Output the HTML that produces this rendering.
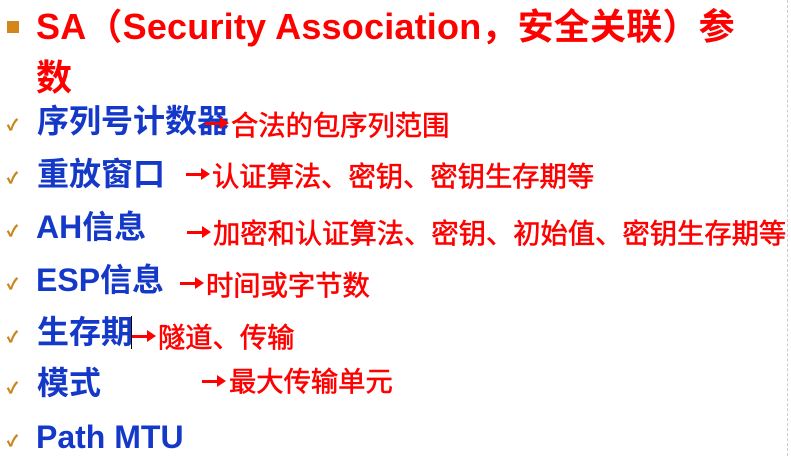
<!DOCTYPE html>
<html><head><meta charset="utf-8"><style>
body{margin:0;width:791px;height:456px;background:#fff;position:relative;overflow:hidden;font-family:"Liberation Sans","Noto Sans CJK SC",sans-serif;font-weight:bold}
.t{position:absolute;white-space:nowrap;line-height:1}
.r{color:#f00;font-size:27.3px;font-weight:normal;font-family:"Liberation Sans","Noto Sans CJK SC",sans-serif;-webkit-text-stroke:0.6px #f00}
.b{color:#1438c8;font-size:32px}
.ck{position:absolute;color:#c8861e;font-size:15px;left:7px;font-weight:bold;-webkit-text-stroke:0.5px #c8861e}
.ar{position:absolute;height:3px;background:#f00}
.ar:after{content:"";position:absolute;right:-4px;top:-5px;border-left:9px solid #f00;border-top:6.5px solid transparent;border-bottom:6.5px solid transparent}
</style></head><body>
<div style="position:absolute;left:787px;top:0;height:456px;border-left:1px dashed #ccc"></div>
<div style="position:absolute;left:7px;top:21px;width:12px;height:12px;background:#d4861a"></div>
<div class="t" style="left:36px;top:9px;color:#f00;font-size:36px;letter-spacing:0.2px">SA（Security Association，安全关联）参</div>
<div class="t" style="left:36px;top:60px;color:#f00;font-size:36px">数</div>

<div class="ck" style="top:114px">✓</div>
<div class="t b" style="left:37px;top:105px">序列号计数器</div>
<div class="ar" style="left:205px;top:122px;width:20px"></div>
<div class="t r" style="left:231px;top:112px">合法的包序列范围</div>

<div class="ck" style="top:167px">✓</div>
<div class="t b" style="left:37px;top:158px">重放窗口</div>
<div class="ar" style="left:186px;top:173px;width:20px"></div>
<div class="t r" style="left:212px;top:163px">认证算法、密钥、密钥生存期等</div>

<div class="ck" style="top:220px">✓</div>
<div class="t b" style="left:36px;top:211px">AH信息</div>
<div class="ar" style="left:187px;top:231px;width:20px"></div>
<div class="t r" style="left:213px;top:220px">加密和认证算法、密钥、初始值、密钥生存期等</div>

<div class="ck" style="top:273px">✓</div>
<div class="t b" style="left:36px;top:264px">ESP信息</div>
<div class="ar" style="left:180px;top:282px;width:20px"></div>
<div class="t r" style="left:206px;top:272px">时间或字节数</div>

<div class="ck" style="top:326px">✓</div>
<div class="t b" style="left:37px;top:316px">生存期</div>
<div style="position:absolute;left:131px;top:316px;width:1px;height:33px;background:#000"></div>
<div class="ar" style="left:132px;top:335px;width:20px"></div>
<div class="t r" style="left:158px;top:324px">隧道、传输</div>

<div class="ck" style="top:377px">✓</div>
<div class="t b" style="left:37px;top:367px">模式</div>
<div class="ar" style="left:202px;top:380px;width:20px"></div>
<div class="t r" style="left:229px;top:368px">最大传输单元</div>

<div class="ck" style="top:430px">✓</div>
<div class="t b" style="left:36px;top:421px">Path MTU</div>
</body></html>
